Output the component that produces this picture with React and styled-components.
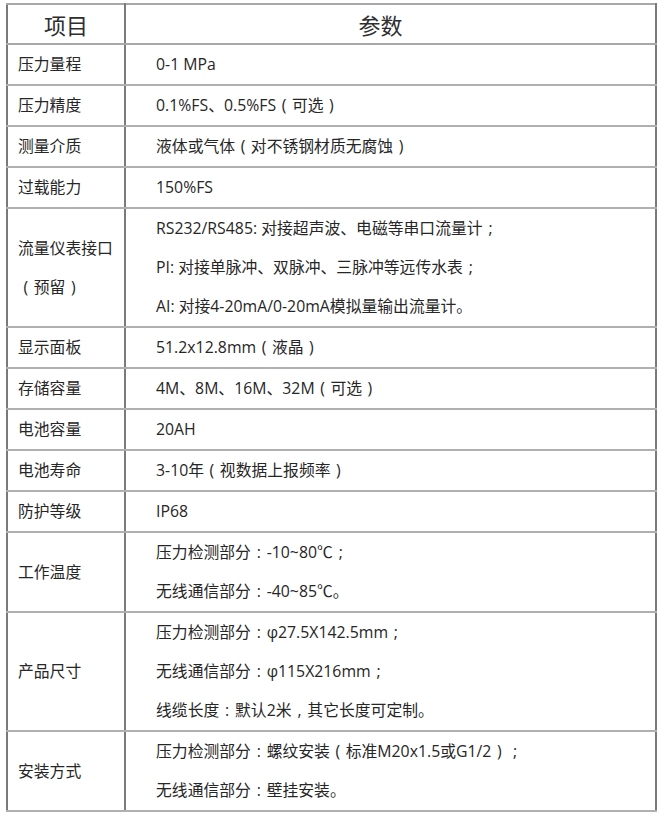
import React from "react";
import styled, { createGlobalStyle } from "styled-components";

const GlobalStyle = createGlobalStyle`
  html, body {
    margin: 0;
    padding: 0;
    background: #fff;
  }
  body {
    font-family: "Open Sans", "Noto Sans CJK SC", sans-serif;
    color: #262626;
  }
`;

const Page = styled.div`
  padding: 3px 0 0 6px;
`;

const Table = styled.table`
  width: 651px;
  border-collapse: collapse;
  table-layout: fixed;
`;

const Th = styled.th`
  height: 38px;
  padding: 0 ${(props) => props.$right || 0}px 0 0;
  font-size: 22px;
  font-weight: 400;
  color: #2e2e2e;
  text-align: center;
  border-top: 2px solid #a8a8a8;
  border-bottom: 2px solid #a8a8a8;
  border-left: 2px solid #7a7a7a;
  border-right: 2px solid #7a7a7a;
`;

const Td = styled.td`
  padding: ${(props) => (props.$label ? "0 0 0 10px" : "0 0 0 30px")};
  font-size: 15.8px;
  line-height: 39px;
  vertical-align: middle;
  white-space: nowrap;
  border-top: 2px solid #b0b0b0;
  border-bottom: 2px solid #b0b0b0;
  border-left: 2px solid #7a7a7a;
  border-right: 2px solid #7a7a7a;
`;

const Line = styled.div`
  height: 39px;
`;

// full-width punctuation drawn centred in its em box, as in the screenshot
const Punct = styled.span`
  display: inline-block;
  width: 1em;
  text-align: center;
`;

const PUNCT = { "（": "(", "）": ")", "：": ":", "，": ",", "；": ";" };

const renderText = (text) =>
  Array.from(text).map((ch, i) =>
    PUNCT[ch] ? <Punct key={i}>{PUNCT[ch]}</Punct> : ch
  );

const rows = [
  ["压力量程", ["0-1 MPa"]],
  ["压力精度", ["0.1%FS、0.5%FS（可选）"]],
  ["测量介质", ["液体或气体（对不锈钢材质无腐蚀）"]],
  ["过载能力", ["150%FS"]],
  [
    ["流量仪表接口", "（预留）"],
    [
      "RS232/RS485: 对接超声波、电磁等串口流量计；",
      "PI: 对接单脉冲、双脉冲、三脉冲等远传水表；",
      "AI: 对接4-20mA/0-20mA模拟量输出流量计。",
    ],
  ],
  ["显示面板", ["51.2x12.8mm（液晶）"]],
  ["存储容量", ["4M、8M、16M、32M（可选）"]],
  ["电池容量", ["20AH"]],
  ["电池寿命", ["3-10年（视数据上报频率）"]],
  ["防护等级", ["IP68"]],
  ["工作温度", ["压力检测部分：-10~80℃；", "无线通信部分：-40~85℃。"]],
  [
    "产品尺寸",
    [
      "压力检测部分：φ27.5X142.5mm；",
      "无线通信部分：φ115X216mm；",
      "线缆长度：默认2米，其它长度可定制。",
    ],
  ],
  ["安装方式", ["压力检测部分：螺纹安装（标准M20x1.5或G1/2）；", "无线通信部分：壁挂安装。"]],
];

const App = () => {
  return (
    <Page>
      <GlobalStyle />
      <Table>
        <colgroup>
          <col style={{ width: "118px" }} />
          <col />
        </colgroup>
        <thead>
          <tr>
            <Th>项目</Th>
            <Th $right={20}>参数</Th>
          </tr>
        </thead>
        <tbody>
          {rows.map(([label, values], i) => (
            <tr key={i}>
              <Td $label>
                {Array.isArray(label)
                  ? label.map((l, j) => <Line key={j}>{renderText(l)}</Line>)
                  : label}
              </Td>
              <Td>
                {values.map((v, j) => (
                  <Line key={j}>{renderText(v)}</Line>
                ))}
              </Td>
            </tr>
          ))}
        </tbody>
      </Table>
    </Page>
  );
};

export default App;
